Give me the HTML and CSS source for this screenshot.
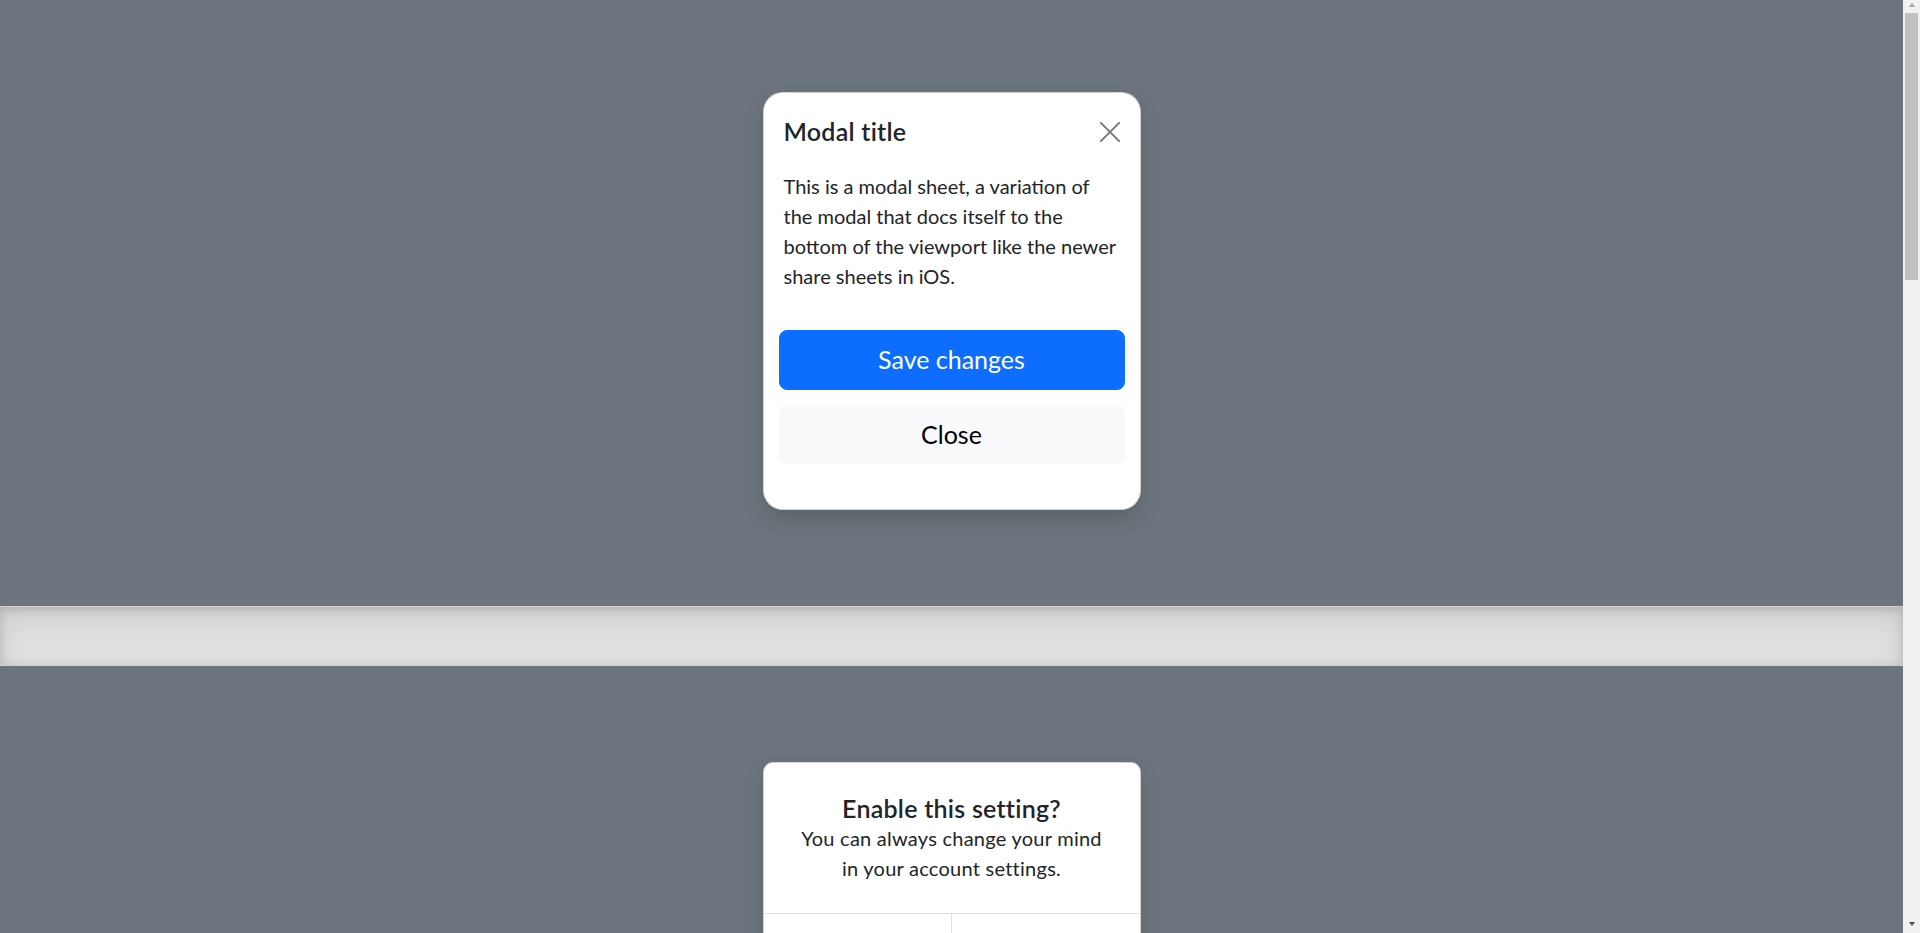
FILE: index.html
```html
<!DOCTYPE html>
<html lang="en">
<head>
<meta charset="utf-8">
<title>Modals</title>
<link rel="stylesheet" href="styles.css">
</head>
<body>
<main>
  <section class="stage stage-sheet">
    <div class="sheet" role="dialog" aria-labelledby="sheetTitle">
      <div class="sheet-header">
        <h1 class="sheet-title" id="sheetTitle">Modal title</h1>
        <button type="button" class="btn-close" aria-label="Close">
          <svg viewBox="0 0 16 16" width="20" height="20" aria-hidden="true"><path d="M.6.6 15.4 15.4M15.4.6.6 15.4" stroke="currentColor" stroke-width="1.5" stroke-linecap="round" fill="none"/></svg>
        </button>
      </div>
      <div class="sheet-body">
        <p>This is a modal sheet, a variation of the modal that docs itself to the bottom of the viewport like the newer share sheets in iOS.</p>
      </div>
      <div class="sheet-footer">
        <button type="button" class="btn btn-lg btn-primary">Save changes</button>
        <button type="button" class="btn btn-lg btn-light">Close</button>
      </div>
    </div>
  </section>

  <div class="divider"></div>

  <section class="stage stage-alert">
    <div class="alert-card" role="dialog">
      <div class="alert-body">
        <h5 class="alert-title">Enable this setting?</h5>
        <p>You can always change your mind in your account settings.</p>
      </div>
      <div class="alert-footer">
        <button type="button" class="link-btn link-btn-first"><strong>Yes, enable</strong></button>
        <button type="button" class="link-btn">No thanks</button>
      </div>
    </div>
  </section>

  <div class="divider"></div>

  <section class="stage stage-tour">
    <div class="tour-card" role="dialog">
      <div class="tour-body">
        <h2 class="tour-title">What's new</h2>
        <ul class="tour-list">
          <li>
            <span class="tour-icon"></span>
            <div><h5>Grid view</h5><p>Not into lists? Try the new grid view.</p></div>
          </li>
          <li>
            <span class="tour-icon"></span>
            <div><h5>Bookmarks</h5><p>Save items you love for easy access later.</p></div>
          </li>
          <li>
            <span class="tour-icon"></span>
            <div><h5>Video embeds</h5><p>Share videos wherever you go.</p></div>
          </li>
        </ul>
        <button type="button" class="btn btn-lg btn-primary btn-block">Great, thanks!</button>
      </div>
    </div>
  </section>

  <div class="divider"></div>

  <section class="stage stage-signin">
    <div class="signin-card" role="dialog">
      <div class="signin-header">
        <h1 class="signin-title">Sign up for free</h1>
      </div>
      <div class="signin-body">
        <div class="field">Email address</div>
        <div class="field">Password</div>
        <button type="button" class="btn btn-lg btn-primary btn-block">Sign up</button>
        <small class="muted">By clicking Sign up, you agree to the terms of use.</small>
        <hr>
        <h2 class="or-title">Or use a third-party</h2>
        <button type="button" class="btn btn-lg btn-outline btn-block">Sign up with Google</button>
        <button type="button" class="btn btn-lg btn-outline btn-block">Sign up with Facebook</button>
      </div>
    </div>
  </section>

  <div class="divider"></div>

  <section class="stage-end">
    <button type="button" class="btn btn-lg btn-primary">Launch demo modal</button>
  </section>
</main>
<div class="scrollbar" aria-hidden="true">
  <span class="sb-arrow"><span class="tri tri-up"></span></span>
  <span class="sb-thumb"></span>
  <span class="sb-arrow sb-arrow-end"><span class="tri tri-down"></span></span>
</div>
</body>
</html>
```
FILE: styles.css
```css
html { background: #fff; }
body {
  margin: 0;
  padding-right: 17px;
  font-family: Lato, "Noto Sans", "Liberation Sans", sans-serif;
  font-size: 20px;
  line-height: 1.5;
  color: #212529;
}
h1, h2, h5, p { margin: 0; }

/* imitation of the classic window scrollbar */
.scrollbar {
  position: fixed;
  top: 0;
  right: 0;
  width: 17px;
  height: 100vh;
  background: #f1f1f1;
  display: flex;
  flex-direction: column;
}
.sb-arrow {
  height: 13px;
  display: flex;
  justify-content: center;
  align-items: flex-start;
  padding-top: 3px;
  box-sizing: border-box;
}
.sb-arrow-end {
  margin-top: auto;
  padding-top: 2px;
}
.tri {
  width: 0;
  height: 0;
  border-left: 3.5px solid transparent;
  border-right: 3.5px solid transparent;
}
.tri-up { border-bottom: 4px solid #a3a3a3; }
.tri-down { border-top: 4px solid #505050; }
.sb-thumb {
  height: 267px;
  margin: 0 2px;
  background: #c1c1c1;
}

.stage {
  background: #6c757d;
  display: flex;
  justify-content: center;
}
.stage-sheet { padding: 92px 0 96px; }
.stage-alert { padding: 96px 0; }
.stage-tour { padding: 96px 0; }
.stage-signin { padding: 96px 0; }
.stage-end {
  display: flex;
  justify-content: center;
  align-items: center;
  min-height: 420px;
}

.divider {
  height: 60px;
  box-sizing: border-box;
  background: #e1e1e1;
  border-top: 1px solid #d0d0d0;
  border-bottom: 1px solid #cfcfcf;
  box-shadow: inset 0 10px 30px rgba(0,0,0,.1), inset 0 2.5px 10px rgba(0,0,0,.15);
}

/* sheet modal */
.sheet {
  width: 378px;
  box-sizing: border-box;
  background: #fff;
  border: 1px solid rgba(0,0,0,.175);
  border-radius: 20px;
  box-shadow: 0 10px 20px rgba(0,0,0,.15);
  overflow: hidden;
}
.sheet-header {
  display: flex;
  align-items: center;
  justify-content: space-between;
  padding: 20px;
}
.sheet-title {
  font-size: 25px;
  font-weight: 600;
  line-height: 1.5;
  letter-spacing: .01em;
}
.btn-close {
  border: 0;
  background: transparent;
  padding: 5px;
  margin: -5px -5px -5px auto;
  width: 30px;
  height: 30px;
  color: #000;
  opacity: .5;
  display: flex;
  align-items: center;
  justify-content: center;
  cursor: pointer;
}
.sheet-body { padding: 0 20px; }
.sheet-body p { margin-bottom: 20px; }
.sheet-footer {
  display: flex;
  flex-direction: column;
  gap: 15px;
  padding: 19.5px 15px 45px;
}

.btn {
  font-family: inherit;
  font-size: 25px;
  line-height: 1.5;
  padding: 10px 20px;
  border: 1px solid transparent;
  border-radius: 8px;
  cursor: pointer;
}
.btn-primary { background: #0d6efd; border-color: #0d6efd; color: #fff; }
.btn-light { background: #f8f9fa; border-color: #f8f9fa; color: #000; }
.btn-outline { background: #fff; border-color: #6c757d; color: #6c757d; }
.btn-block { width: 100%; display: block; }

/* alert modal */
.alert-card {
  width: 378px;
  box-sizing: border-box;
  background: #fff;
  border: 1px solid rgba(0,0,0,.175);
  border-radius: 10px;
  box-shadow: 0 10px 20px rgba(0,0,0,.15);
  overflow: hidden;
}
.alert-body {
  padding: 30px;
  text-align: center;
}
.alert-title {
  font-size: 25px;
  font-weight: 600;
  line-height: 1.2;
  letter-spacing: .01em;
}
.alert-body p { letter-spacing: .25px; }
.alert-footer {
  display: flex;
  border-top: 1px solid #dee2e6;
}
.link-btn {
  flex: 1 1 50%;
  font-family: inherit;
  font-size: 20px;
  line-height: 1.5;
  padding: 20px 0;
  border: 0;
  background: transparent;
  color: #0d6efd;
  cursor: pointer;
}
.link-btn-first { border-right: 1px solid #dee2e6; }

/* tour modal */
.tour-card {
  width: 500px;
  background: #fff;
  border-radius: 20px;
  box-shadow: 0 10px 20px rgba(0,0,0,.15);
}
.tour-body { padding: 60px 50px; }
.tour-title { font-size: 40px; font-weight: 700; margin-bottom: 40px; }
.tour-list { list-style: none; margin: 0 0 60px; padding: 0; display: flex; flex-direction: column; gap: 30px; }
.tour-list li { display: flex; gap: 30px; }
.tour-list h5 { font-size: 25px; font-weight: 500; margin-bottom: 0; }
.tour-icon { flex: 0 0 60px; height: 60px; border-radius: 12px; background: #e7f1ff; }

/* signin modal */
.signin-card {
  width: 500px;
  background: #fff;
  border-radius: 20px;
  box-shadow: 0 10px 20px rgba(0,0,0,.15);
}
.signin-header { padding: 50px 50px 0; }
.signin-title { font-size: 40px; font-weight: 700; }
.signin-body { padding: 30px 50px 50px; display: flex; flex-direction: column; gap: 15px; }
.field {
  border: 1px solid #dee2e6;
  border-radius: 10px;
  padding: 20px;
  color: #6c757d;
}
.muted { color: #6c757d; font-size: 17px; }
.signin-body hr { width: 100%; border: 0; border-top: 1px solid #dee2e6; margin: 15px 0; }
.or-title { font-size: 25px; font-weight: 700; }
```
